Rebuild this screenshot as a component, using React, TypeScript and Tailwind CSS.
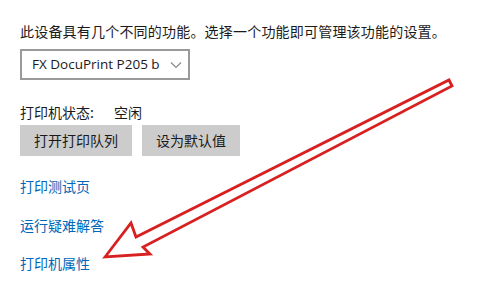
import React from "react";

export default function App() {
  const font = { fontFamily: '"Noto Sans CJK SC", "Noto Sans", sans-serif' };
  return (
    <div className="relative w-[492px] h-[281px] bg-white overflow-hidden" style={font}>
      <div className="flex flex-col items-start pl-[20px] pt-[21px] text-[14px] text-[#1a1a1a]">
        <div className="h-[20px] leading-[20px] whitespace-nowrap tracking-[0.2px]">此设备具有几个不同的功能。选择一个功能即可管理该功能的设置。</div>
        <div className="mt-[8px] w-[170px] h-[31px] border-2 border-[#9a9a9a] flex items-center pl-[10px]">
          <span className="flex-none text-[13.5px] leading-none whitespace-nowrap" style={{ fontFamily: '"Open Sans", "Noto Sans", sans-serif' }}>FX DocuPrint P205 b</span>
          <svg className="flex-none ml-[10px]" width="12" height="8" viewBox="0 0 12 8">
            <path d="M1 1.5 L6 6.5 L11 1.5" fill="none" stroke="#8a8a8a" strokeWidth="1.2" />
          </svg>
        </div>
        <div className="mt-[22px] h-[20px] leading-[20px] flex whitespace-nowrap">
          <span className="w-[94px]">打印机状态:</span>
          <span>空闲</span>
        </div>
        <div className="mt-[3px] flex gap-[10px]">
          <div className="w-[112px] h-[31px] bg-[#cccccc] flex items-center justify-center text-[14px]">打开打印队列</div>
          <div className="w-[98px] h-[31px] bg-[#cccccc] flex items-center justify-center text-[14px]">设为默认值</div>
        </div>
        <div className="mt-[20px] h-[20px] leading-[20px] text-[#0067b8]">打印测试页</div>
        <div className="mt-[19px] h-[20px] leading-[20px] text-[#0067b8]">运行疑难解答</div>
        <div className="mt-[18px] h-[20px] leading-[20px] text-[#0067b8]">打印机属性</div>
      </div>
      <svg className="absolute left-0 top-0 pointer-events-none" width="492" height="281" viewBox="0 0 492 281">
        <polygon
          points="105,257 131,223 136,237 449,80 452,86 143,247 150,254"
          fill="none"
          stroke="#d82020"
          strokeWidth="2.8"
          strokeLinejoin="miter"
        />
      </svg>
    </div>
  );
}
